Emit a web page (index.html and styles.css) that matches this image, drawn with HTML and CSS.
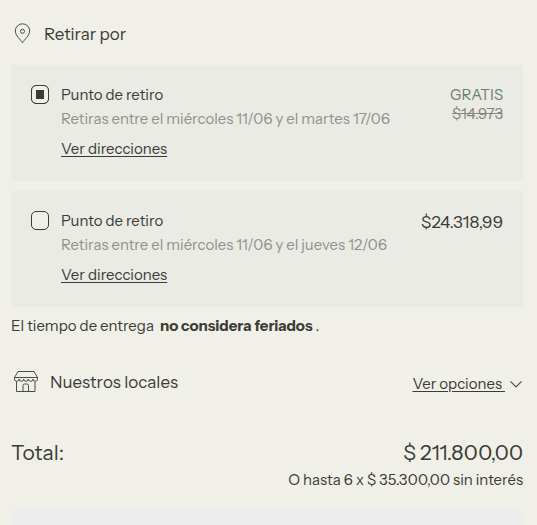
FILE: index.html
```html
<!DOCTYPE html>
<html lang="es">
<head>
    <meta charset="UTF-8">
    <meta name="viewport" content="width=device-width, initial-scale=1.0">
    <title>Retirar por</title>
    <link rel="stylesheet" href="styles.css">
</head>
<body>
    <form class="shipping">
        <h2 class="section-title">
            <svg class="icon-pin" viewBox="0 0 18 22" width="18" height="22" aria-hidden="true">
                <path d="M8.500 19.800C7 16.800 1.300 12.700 1.300 8a7.200 7.200 0 0 1 14.400 0c0 4.700-5.700 8.800-7.200 11.800z"/>
                <circle cx="8.500" cy="8.300" r="2"/>
            </svg>
            Retirar por
        </h2>

        <div class="option">
            <input type="radio" name="pickup" id="pickup1" class="option-radio" checked>
            <div class="option-info">
                <label class="option-name" for="pickup1">Punto de retiro</label>
                <div class="option-date">Retiras entre el miércoles 11/06 y el martes 17/06</div>
                <a href="#" class="link option-link">Ver direcciones</a>
            </div>
            <div class="option-price">
                <div class="free">GRATIS</div>
                <del class="old-price">$14.973</del>
            </div>
        </div>

        <div class="option">
            <input type="radio" name="pickup" id="pickup2" class="option-radio">
            <div class="option-info">
                <label class="option-name" for="pickup2">Punto de retiro</label>
                <div class="option-date">Retiras entre el miércoles 11/06 y el jueves 12/06</div>
                <a href="#" class="link option-link">Ver direcciones</a>
            </div>
            <div class="option-price">
                <div class="price">$24.318,99</div>
            </div>
        </div>

        <p class="note">El tiempo de entrega <strong>no considera feriados</strong> .</p>
    </form>

    <div class="stores">
        <h2 class="stores-title">
            <svg class="icon-store" viewBox="0 0 26 24" width="26" height="24" aria-hidden="true">
                <path d="M5 1.500h16l3.500 6h-23z"/>
                <path d="M1.500 7.500v1.500a2.300 2.300 0 0 0 4.600 0 2.300 2.300 0 0 0 4.600 0 2.300 2.300 0 0 0 4.600 0 2.300 2.300 0 0 0 4.600 0 2.300 2.300 0 0 0 4.600 0V7.500"/>
                <path d="M3.500 11.500v10h18.500v-10M10 21.500v-6a1.500 1.500 0 0 1 1.500-1.500h2.500a1.500 1.500 0 0 1 1.500 1.500v6"/>
            </svg>
            Nuestros locales
        </h2>
        <button type="button" class="stores-toggle">
            <span class="link">Ver opciones&nbsp;</span>
            <svg class="icon-chevron" viewBox="0 0 14 8" width="14" height="8" aria-hidden="true">
                <path d="M1.500 1.300L7 6.800l5.500-5.500"/>
            </svg>
        </button>
    </div>

    <div class="total">
        <span>Total:</span>
        <span>$ 211.800,00</span>
    </div>
    <div class="installments">O hasta 6 x $ 35.300,00 sin interés</div>

    <div class="panel"></div>
</body>
</html>
```

FILE: styles.css
```css
* {
    box-sizing: border-box;
}
body {
    display: flex;
    flex-direction: column;
    min-height: 100vh;
    margin: 0;
    padding: 0 14px 0 11px;
    background: #f0f0e9;
    color: #3c3c36;
    font-family: "Instrument Sans", Inter, "Liberation Sans", sans-serif;
    font-size: 15px;
    line-height: 24px;
}
h2, p {
    margin: 0;
    font-weight: 400;
}
svg {
    flex: none;
    fill: none;
    stroke: #4c4c46;
}
.section-title {
    display: flex;
    align-items: center;
    gap: 12px;
    padding: 22px 3px 19px;
    font-size: 17px;
}
.option {
    display: flex;
    align-items: flex-start;
    margin-bottom: 10px;
    padding: 18px 20px 20px;
    background: #e9ebe4;
}
.option-radio {
    appearance: none;
    flex: none;
    width: 18px;
    height: 19px;
    margin: 2px 12px 0 0;
    border: 1px solid #3c3c36;
    border-radius: 5px;
    background: #f0f0e9;
}
.option-radio:checked {
    background: #3c3c36;
    box-shadow: inset 0 0 0 4px #f0f0e9;
}
.option-info {
    flex: 1;
}
.option-name {
    display: block;
}
.option-date {
    color: #91928b;
}
.link {
    color: #3c3c36;
    text-decoration: underline;
    text-underline-offset: 2px;
}
.option-link {
    display: inline-block;
    margin-top: 6px;
}
.option-price {
    text-align: right;
}
.free {
    color: #68806e;
}
.old-price {
    display: block;
    color: #85867f;
    line-height: 14px;
}
.price {
    font-size: 17px;
    line-height: 26px;
}
.note {
    margin-top: -3px;
}
.note strong {
    margin-left: 3px;
    font-weight: 700;
}
.stores {
    display: flex;
    align-items: center;
    justify-content: space-between;
    margin-top: 30px;
}
.stores-title {
    display: flex;
    align-items: center;
    gap: 11px;
    padding-left: 2px;
    font-size: 17px;
}
.stores-toggle {
    display: flex;
    align-items: center;
    gap: 4px;
    padding: 4px 0 0;
    border: 0;
    background: none;
    font: inherit;
    cursor: pointer;
}
.icon-chevron {
    stroke-width: 1.2;
}
.total {
    display: flex;
    justify-content: space-between;
    margin-top: 42px;
    font-size: 21px;
    line-height: 30px;
}
.installments {
    text-align: right;
}
.panel {
    flex: 1;
    min-height: 16px;
    margin-top: 16px;
    border-radius: 10px 10px 0 0;
    background: #ededed;
}
```
